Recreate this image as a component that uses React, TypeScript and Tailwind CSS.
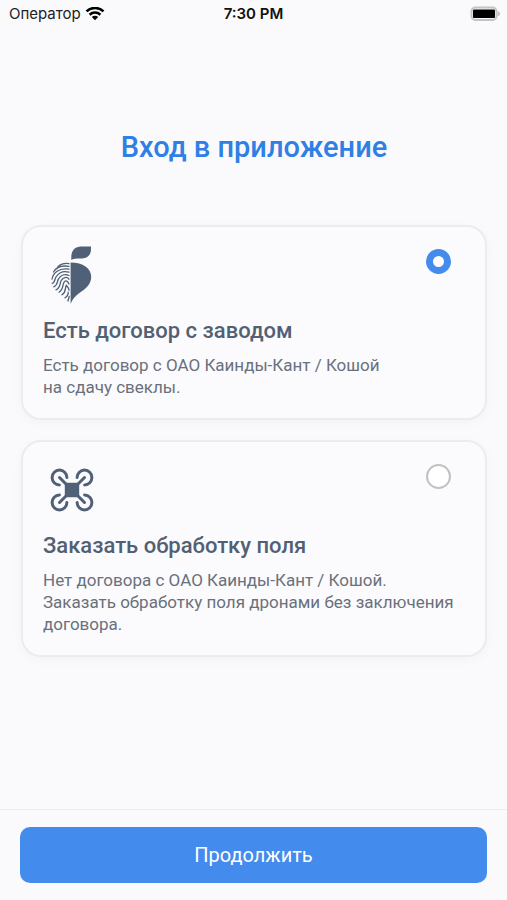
import { useState } from "react";
import type { ReactNode } from "react";

function WifiIcon() {
  return (
    <svg width="20" height="14" viewBox="0 0 20 14" fill="none" aria-hidden="true">
      <path d="M1.5 4.4C6.3-.2 13.7-.2 18.5 4.4M4.6 7.7C7.7 4.9 12.3 4.9 15.4 7.7" stroke="#000" strokeWidth="2.5" />
      <path d="M6.8 10C8.7 8.4 11.3 8.4 13.2 10L10 13.2Z" fill="#000" />
    </svg>
  );
}

function BatteryIcon() {
  return (
    <svg width="32" height="16" viewBox="0 0 32 16" fill="none" aria-hidden="true">
      <rect x="1.5" y="1.5" width="25" height="12.5" rx="4" stroke="#c4c4c4" strokeWidth="2" />
      <rect x="3" y="3.5" width="22" height="8.5" rx="1" fill="#000" />
      <path d="M27.5 5C31 6 31 9.5 27.5 10.5Z" fill="#c4c4c4" />
    </svg>
  );
}

function BeetIcon() {
  return (
    <svg width="44" height="60" viewBox="0 0 44 60" fill="none" aria-hidden="true">
      <path d="M21.3 15V12C21.3 5.5 25 1.5 31 1.5H41V4C41 10.5 37 13.6 31 13.6C26 13.6 23 14 21.3 15Z" fill="#4f6077" />
      <path d="M20.6 17.5C33 17.5 41.2 23 41.2 32C41.2 39 36 43.5 30 47.5C25 51 22 55 20.6 59Z" fill="#4f6077" />
      <g stroke="#4f6077" strokeWidth="1.3" strokeLinecap="round">
        <path d="M8 21.5C11.5 18.5 15.5 18 19 18.6" />
        <path d="M3.5 27C6 22.5 11.5 20.2 19 21.3" />
        <path d="M2 34C3 28.5 9 22.2 19 24.2" />
        <path d="M2.2 38.5C5 37.5 4.5 34.5 6 32C9 27.4 13.5 25.6 19 27.2" />
        <path d="M3.8 41.8C8 40 7 36 8.5 34C10.7 30 14.8 28.6 19 30.5" />
        <path d="M6 44.8C11 42.3 9.5 38 11.3 35.3C13.2 32.3 17 31.3 19 34.2" />
        <path d="M9 47.2C14 44.3 12 39.6 14.4 36.6C16.5 34.6 18 37 19 39" />
        <path d="M12 49.8C16.8 46.5 14.5 43 16.3 40.3C17.5 42 19 43 19 45.2" />
        <path d="M15 52.8C17.8 51 18.3 49 18.2 47.2M18 56L19.2 51.5" />
      </g>
    </svg>
  );
}

function DroneIcon() {
  return (
    <svg width="44" height="44" viewBox="0 0 44 44" fill="none" aria-hidden="true">
      <rect x="14.8" y="14.8" width="14.4" height="14.4" rx=".5" fill="#4f6077" />
      <g stroke="#4f6077" strokeWidth="3" strokeLinecap="round">
        <path d="M9.5 9.5L16 16M34.5 9.5L28 16M9.5 34.5L16 28M34.5 34.5L28 28" />
        <path d="M16.9 9.4A7.4 7.4 0 1 0 9.4 16.9" />
        <path d="M27.1 9.4A7.4 7.4 0 1 1 34.6 16.9" />
        <path d="M16.9 34.6A7.4 7.4 0 1 1 9.4 27.1" />
        <path d="M27.1 34.6A7.4 7.4 0 1 0 34.6 27.1" />
      </g>
    </svg>
  );
}

type OptionProps = {
  value: string;
  selected: string;
  onSelect: (value: string) => void;
  icon: ReactNode;
  title: string;
  children: ReactNode;
};

function OptionCard({ value, selected, onSelect, icon, title, children }: OptionProps) {
  return (
    <label className="block cursor-pointer rounded-[20px] border-2 border-[#ececee] bg-[#fbfbfd] px-5 pt-[18px] pb-5 shadow-[0_3px_12px_rgba(0,0,0,0.03)]">
      <span className="flex h-[60px] items-start justify-between pr-[14px] pl-[7px]">
        <span className="flex h-full items-center">{icon}</span>
        <input
          type="radio"
          name="login-type"
          value={value}
          checked={selected === value}
          onChange={() => onSelect(value)}
          className="mt-1 size-[25px] appearance-none rounded-full border-2 border-[#bfc1c4] bg-white checked:border-[7px] checked:border-[#448bee]"
        />
      </span>
      <span className="mt-3 block text-[22px] leading-7 font-medium text-[#526073]">{title}</span>
      <span className="mt-[9px] block text-[17px] leading-[22px] text-[#6a707c]">{children}</span>
    </label>
  );
}

export default function App() {
  const [selected, setSelected] = useState("contract");

  return (
    <div className="flex min-h-screen flex-col bg-[#fafafc] font-['Roboto',sans-serif]">
      <header className="grid h-7 grid-cols-3 items-center px-[5px]">
        <div className="flex items-center gap-1 pl-1 font-['Inter',sans-serif] text-[15px] text-[#222]">
          Оператор
          <WifiIcon />
        </div>
        <time className="text-center font-['Inter',sans-serif] text-[15px] font-semibold text-[#111]">7:30 PM</time>
        <div className="flex justify-end">
          <BatteryIcon />
        </div>
      </header>

      <main className="grow pt-[99px] pr-5 pb-8 pl-[21px]">
        <h1 className="text-center text-[29px] leading-10 font-medium text-[#2f7fe5]">Вход в приложение</h1>
        <div className="mt-[58px] flex flex-col gap-5" role="radiogroup" aria-label="Вход в приложение">
          <OptionCard value="contract" selected={selected} onSelect={setSelected} icon={<BeetIcon />} title="Есть договор с заводом">
            Есть договор с ОАО Каинды-Кант / Кошой
            <br />
            на сдачу свеклы.
          </OptionCard>
          <OptionCard value="order" selected={selected} onSelect={setSelected} icon={<DroneIcon />} title="Заказать обработку поля">
            Нет договора с ОАО Каинды-Кант / Кошой.
            <br />
            Заказать обработку поля дронами без заключения договора.
          </OptionCard>
        </div>
      </main>

      <footer className="border-t border-[#ededf0] px-5 py-[17px]">
        <button type="button" className="h-14 w-full rounded-[10px] bg-[#448bee] text-xl text-white">
          Продолжить
        </button>
      </footer>
    </div>
  );
}
